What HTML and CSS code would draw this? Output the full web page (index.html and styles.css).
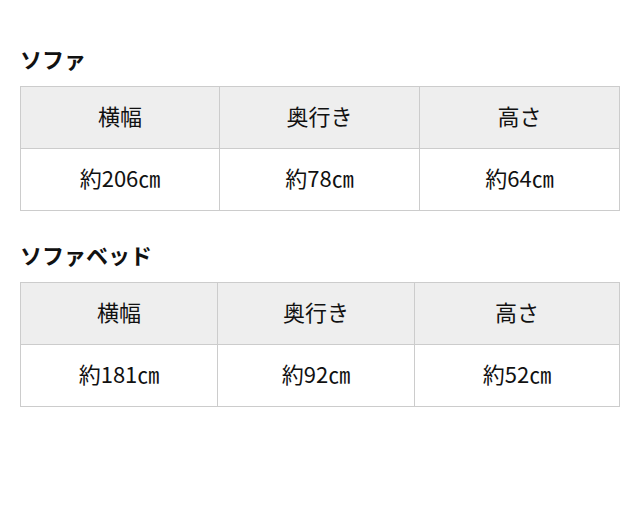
FILE: index.html
```html
<!DOCTYPE html>
<html lang="ja">
<head>
<meta charset="utf-8">
<link rel="stylesheet" href="styles.css">
</head>
<body>
<div class="page">
  <section class="spec">
    <h2 class="spec-title">ソファ</h2>
    <table class="spec-table">
      <colgroup><col class="c1"><col class="c2"><col class="c3"></colgroup>
      <tr><th>横幅</th><th>奥行き</th><th>高さ</th></tr>
      <tr><td>約206㎝</td><td>約78㎝</td><td>約64㎝</td></tr>
    </table>
  </section>
  <section class="spec">
    <h2 class="spec-title">ソファベッド</h2>
    <table class="spec-table spec-table-b">
      <colgroup><col class="c1"><col class="c2"><col class="c3"></colgroup>
      <tr><th>横幅</th><th>奥行き</th><th>高さ</th></tr>
      <tr><td>約181㎝</td><td>約92㎝</td><td>約52㎝</td></tr>
    </table>
  </section>
</div>
</body>
</html>
```
FILE: styles.css
```css
html, body { margin: 0; padding: 0; background: #fff; }
body {
  font-family: "Noto Sans CJK JP", "Noto Sans", sans-serif;
  color: #111;
}
.page { padding: 44px 20px 20px; }
.spec + .spec { margin-top: 29px; }
.spec-title {
  margin: 0 0 14px;
  font-size: 22px;
  line-height: 28px;
  font-weight: bold;
}
.spec-table {
  width: 100%;
  border-collapse: collapse;
  table-layout: fixed;
}
.spec-table .c1 { width: 199px; }
.spec-table .c2 { width: 200px; }
.spec-table-b .c1 { width: 197px; }
.spec-table-b .c2 { width: 197px; }
.spec-table th, .spec-table td {
  border: 1px solid #ccc;
  text-align: center;
  font-size: 22px;
  font-weight: normal;
  line-height: 28px;
  padding: 14px 10px 19px;
}
.spec-table th { background: #eee; }
```
